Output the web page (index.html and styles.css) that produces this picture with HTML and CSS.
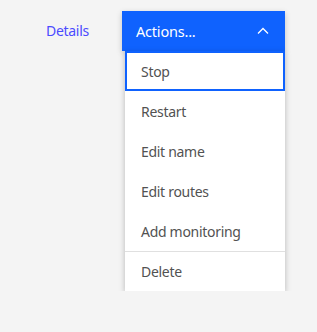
FILE: index.html
```html
<!DOCTYPE html>
<html>
<head>
<meta charset="utf-8">
<link rel="stylesheet" href="styles.css">
</head>
<body>
<div class="page">
  <div class="row">
    <a class="link">Details</a>
    <div class="dropdown">
      <button class="trigger">
        <span>Actions...</span>
        <svg class="chev" width="12" height="8" viewBox="0 0 12 8"><path d="M1 6.5 L6 1.5 L11 6.5" fill="none" stroke="#ffffff" stroke-width="1.3"/></svg>
      </button>
      <ul class="menu">
        <li class="item focused">Stop</li>
        <li class="item">Restart</li>
        <li class="item">Edit name</li>
        <li class="item">Edit routes</li>
        <li class="item">Add monitoring</li>
        <li class="item divider">Delete</li>
      </ul>
    </div>
  </div>
</div>
</body>
</html>
```
FILE: styles.css
```css
html, body {
  margin: 0;
  padding: 0;
  background: #f4f4f4;
  font-family: "Noto Sans", "Open Sans", sans-serif;
  font-size: 14px;
  letter-spacing: -0.3px;
}
.page {
  padding: 11px 0 0 46px;
}
.row {
  display: flex;
  align-items: flex-start;
}
.link {
  color: #4b4bff;
  line-height: 40px;
  width: 76px;
}
.dropdown {
  width: 163px;
  display: flex;
  flex-direction: column;
  align-items: flex-end;
}
.trigger {
  width: 163px;
  height: 40px;
  box-sizing: border-box;
  background: #0f62fe;
  color: #ffffff;
  border: none;
  padding: 0 16px 0 14px;
  display: flex;
  align-items: center;
  justify-content: space-between;
  font-family: inherit;
  font-size: 14.5px;
  letter-spacing: -0.2px;
  box-shadow: 0 2px 6px rgba(0, 0, 0, 0.2);
}
.chev {
  display: block;
}
.menu {
  list-style: none;
  margin: 0;
  padding: 0;
  width: 160px;
  background: #ffffff;
  box-shadow: 0 2px 6px rgba(0, 0, 0, 0.25);
}
.item {
  height: 40px;
  box-sizing: border-box;
  padding: 0 16px;
  display: flex;
  align-items: center;
  color: #525252;
}
.item.focused {
  border: 2px solid #0f62fe;
  padding-left: 14px;
}
.item.divider {
  border-top: 1px solid #e0e0e0;
}
```
